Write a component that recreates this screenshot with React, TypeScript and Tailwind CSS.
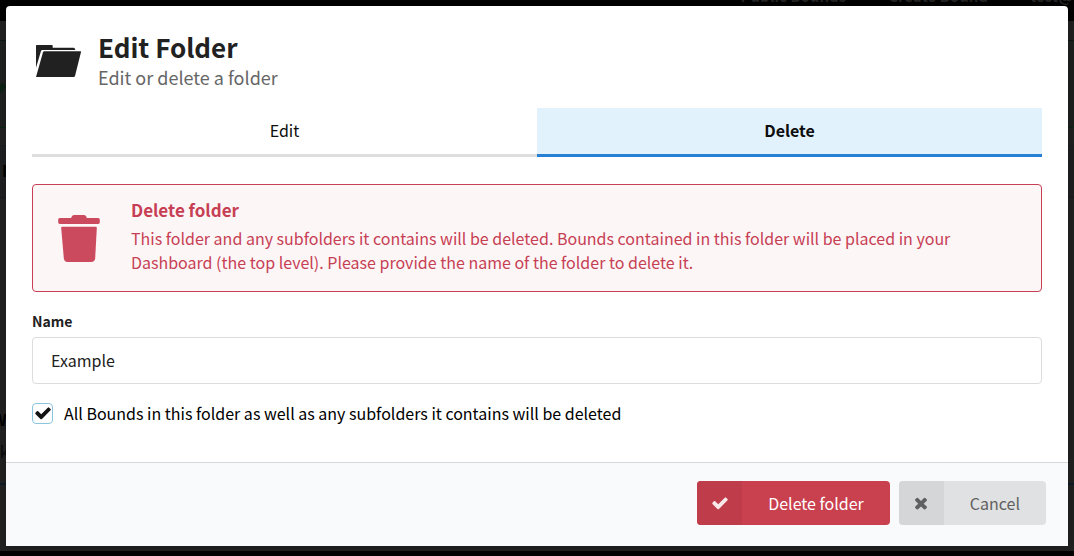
import { useState } from 'react';

const tabs = ['Edit', 'Delete'];
const navLinks = ['Public Bounds', 'Create Bound', 'test@example.com'];

function CheckIcon({ className }: { className?: string }) {
  return (
    <svg viewBox="0 0 1792 1792" fill="currentColor" aria-hidden="true" className={className}>
      <path d="M1671 566q0 40-28 68l-724 724-136 136q-28 28-68 28t-68-28l-136-136-362-362q-28-28-28-68t28-68l136-136q28-28 68-28t68 28l294 295 656-657q28-28 68-28t68 28l136 136q28 28 28 68z" />
    </svg>
  );
}

function CloseIcon({ className }: { className?: string }) {
  return (
    <svg viewBox="0 0 1792 1792" fill="currentColor" aria-hidden="true" className={className}>
      <path d="M1490 1322q0 40-28 68l-136 136q-28 28-68 28t-68-28l-294-294-294 294q-28 28-68 28t-68-28l-136-136q-28-28-28-68t28-68l294-294-294-294q-28-28-28-68t28-68l136-136q28-28 68-28t68 28l294 294 294-294q28-28 68-28t68 28l136 136q28 28 28 68t-28 68l-294 294 294 294q28 28 28 68z" />
    </svg>
  );
}

function FolderIcon({ className }: { className?: string }) {
  return (
    <svg viewBox="0 0 135 96" fill="currentColor" aria-hidden="true" className={className}>
      <path d="M0 2q0-2 2-2h46q2 0 2 2v6h63q2 0 3 2l2 5H19q-3 0-4 3L0 68z" />
      <path d="M25 19h109q1 0 1 2l-18 72q-1 3-4 3H0l21-74q1-3 4-3z" />
    </svg>
  );
}

function TrashIcon({ className }: { className?: string }) {
  return (
    <svg viewBox="0 0 125 141" fill="currentColor" aria-hidden="true" className={className}>
      <path d="M5 9h34q2-9 9-9h29q7 0 9 9h34q5 0 5 5v8q0 5-5 5H5q-5 0-5-5v-8q0-5 5-5z" />
      <path d="M12 35h101q3 0 3 3l-5 92q-1 11-12 11H28q-10 0-11-11L9 38q0-3 3-3z" />
    </svg>
  );
}

function PageBehind() {
  return (
    <div aria-hidden="true" className="absolute inset-0 flex flex-col overflow-hidden bg-[#222222]">
      <div className="flex h-[21px] shrink-0 justify-end bg-black">
        <div className="-mt-4 flex gap-[42px] whitespace-nowrap text-[15px]/6 font-bold text-[#262626]">
          {navLinks.map((link) => (
            <span key={link} className="last:w-11">{link}</span>
          ))}
        </div>
      </div>
      <div className="h-5 shrink-0 border-b border-[#0c1914]" />
      <div className="flex h-[87px] shrink-0 items-center border-b border-[#0a2613] bg-[#1f2121]">
        <CheckIcon className="-ml-5 mt-4 size-7 text-[#0b2213]" />
      </div>
      <div className="h-[18px] shrink-0 border-b border-[#1c1c1c]" />
      <div className="h-[52px] shrink-0 border-b border-[#1a1b1c] bg-[#1e2022] pl-0.5 pt-3 text-base/6 font-bold text-black">
        Name
      </div>
      <div className="flex-1" />
      <div className="h-[148px] shrink-0 pt-1">
        <p className="-ml-2 text-base/6 font-bold text-black">Work</p>
        <p className="-ml-3 mt-2 text-base/6 text-[#0a0a0a]">Ok</p>
        <div className="mt-5 border-b-2 border-[#0e1b29]" />
      </div>
      <div className="h-[5px] shrink-0 bg-black" />
    </div>
  );
}

export default function App() {
  const [active, setActive] = useState('Delete');
  const [name, setName] = useState('Example');
  const [deleteAll, setDeleteAll] = useState(true);

  return (
    <div className="relative min-h-screen font-['Noto_Sans_CJK_JP',sans-serif] text-[#212121]">
      <PageBehind />

      <div className="relative p-1.5">
        <div
          role="dialog"
          aria-labelledby="dialog-title"
          className="overflow-hidden rounded-t bg-white shadow-[1px_3px_15px_2px_rgba(0,0,0,0.2)]"
        >
          <div className="px-[26px] pb-[37px] pt-[23px]">
            {/* Header */}
            <header className="flex items-center gap-[17px] pl-1">
              <FolderIcon className="mt-1 h-8 w-[45px]" />
              <div>
                <h2 id="dialog-title" className="text-[26px]/9 font-bold">Edit Folder</h2>
                <p className="text-lg/6 text-[#666666]">Edit or delete a folder</p>
              </div>
            </header>

            {/* Tabs */}
            <div role="tablist" className="mt-[19px] grid grid-cols-2">
              {tabs.map((tab) => (
                <button
                  key={tab}
                  type="button"
                  role="tab"
                  aria-selected={active === tab}
                  onClick={() => setActive(tab)}
                  className={
                    active === tab
                      ? 'border-b-3 border-[#2680d3] bg-[#e1f2fd] pb-3 pt-2.5 text-base/6 font-bold text-[#0d0d0d]'
                      : 'border-b-3 border-[#dedede] pb-3 pt-2.5 text-base/6 text-[#0d0d0d]'
                  }
                >
                  {tab}
                </button>
              ))}
            </div>

            {/* Warning */}
            <div className="mt-[27px] flex items-center gap-[31px] rounded border border-[#c73f54] bg-[#fdf6f7] py-[15px] pl-[25px] pr-20 text-[#c73f54]">
              <TrashIcon className="h-[47px] w-[42px] shrink-0 text-[#cc4a5e]" />
              <div>
                <h3 className="text-[17px]/5 font-bold">Delete folder</h3>
                <p className="mt-1.5 pb-0.5 text-base/6">
                  This folder and any subfolders it contains will be deleted. Bounds contained in this
                  folder will be placed in your Dashboard (the top level). Please provide the name of the
                  folder to delete it.
                </p>
              </div>
            </div>

            {/* Form */}
            <label htmlFor="folder-name" className="mt-[19px] block text-sm/5 font-bold">Name</label>
            <input
              id="folder-name"
              type="text"
              value={name}
              onChange={(e) => setName(e.target.value)}
              className="mt-1.5 block h-[47px] w-full rounded border border-[#dcdcdd] bg-white px-[18px] pb-0.5 text-base/6 outline-none"
            />
            <div className="mt-[17px] flex items-center gap-[11px]">
              <span className="relative size-[21px]">
                <input
                  id="delete-all"
                  type="checkbox"
                  checked={deleteAll}
                  onChange={(e) => setDeleteAll(e.target.checked)}
                  className="block size-full appearance-none rounded border border-[#8cc5dc] bg-white"
                />
                {deleteAll && (
                  <CheckIcon className="pointer-events-none absolute inset-0 m-auto size-[18px] text-[#121212]" />
                )}
              </span>
              <label htmlFor="delete-all" className="text-base/6 text-black">
                All Bounds in this folder as well as any subfolders it contains will be deleted
              </label>
            </div>
          </div>

          {/* Actions */}
          <footer className="flex justify-end gap-[9px] border-t border-[#d5d7d9] bg-[#f9fafc] px-[22px] pb-[21px] pt-[18px]">
            <button
              type="button"
              className="flex h-11 items-stretch overflow-hidden rounded bg-[#c9404e] text-base/6 text-white"
            >
              <span className="flex w-[45px] items-center justify-center bg-[#bf3d4b]">
                <CheckIcon className="size-[18px] text-[#f9e8ea]" />
              </span>
              <span className="self-center px-[26px]">Delete folder</span>
            </button>
            <button
              type="button"
              className="flex h-11 items-stretch overflow-hidden rounded bg-[#e0e1e2] text-base/6 text-[#606060]"
            >
              <span className="flex w-[45px] items-center justify-center bg-[#d5d6d7]">
                <CloseIcon className="size-[18px]" />
              </span>
              <span className="self-center px-[26px]">Cancel</span>
            </button>
          </footer>
        </div>
      </div>
    </div>
  );
}
